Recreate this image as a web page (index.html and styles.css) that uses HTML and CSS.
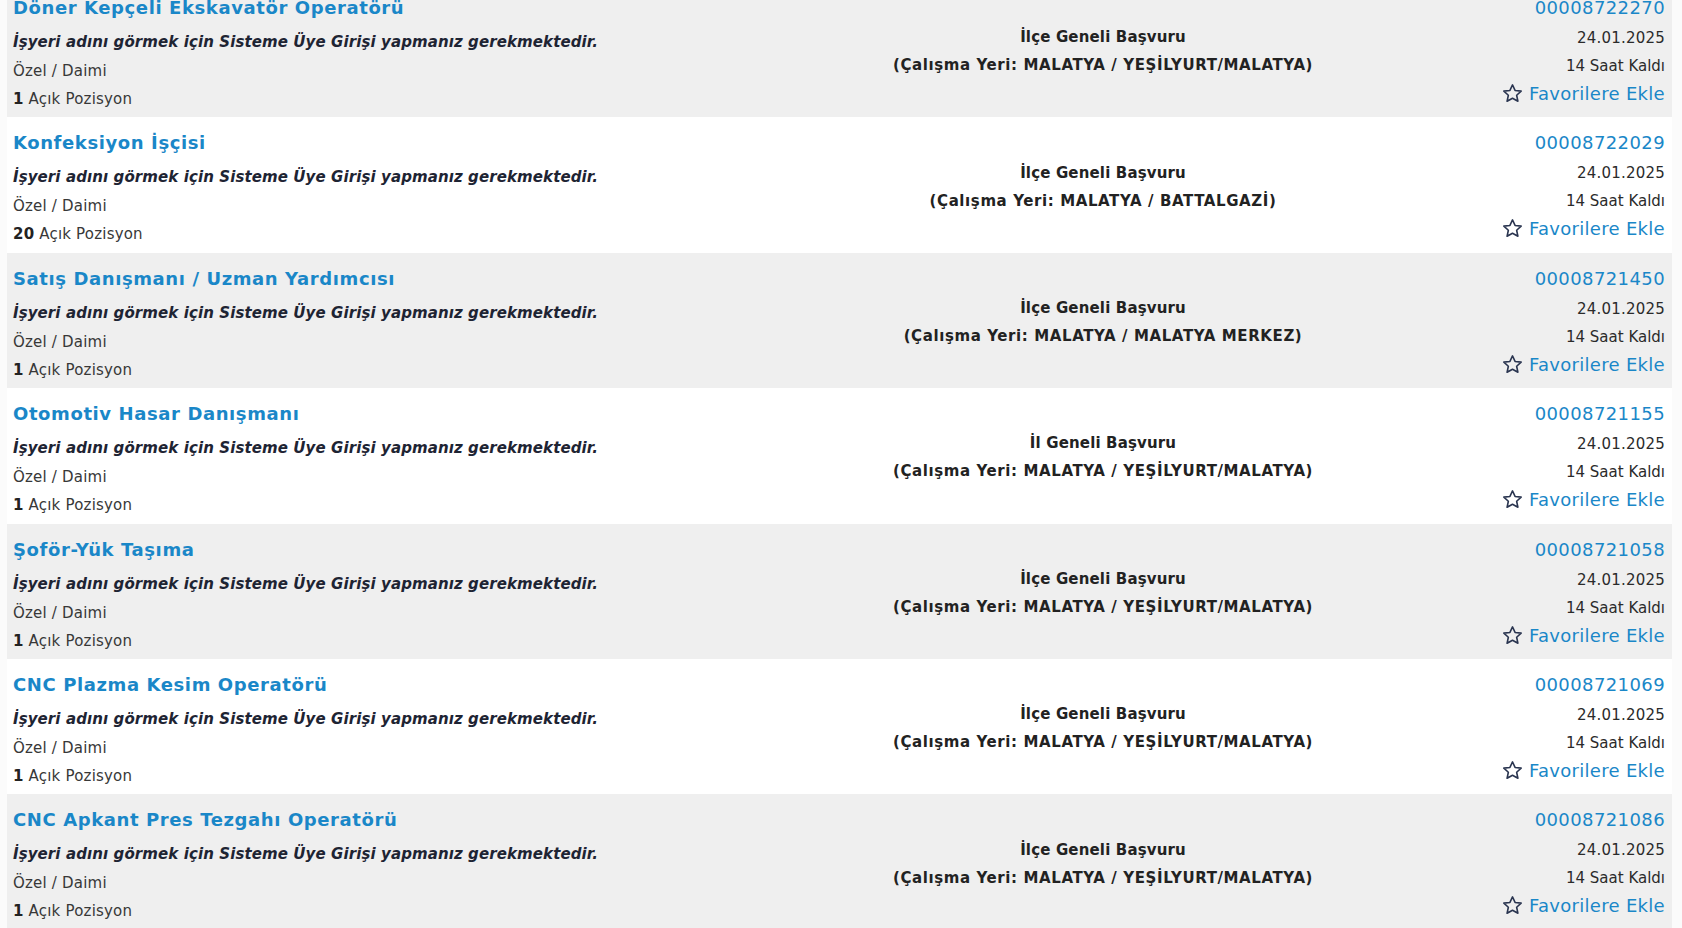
FILE: index.html
```html
<!DOCTYPE html>
<html lang="tr">
<head>
<meta charset="utf-8">
<title>İlanlar</title>
<link rel="stylesheet" href="styles.css">
</head>
<body>
<div class="list">
  <div class="row gray">
    <div class="left">
      <a class="title">Döner Kepçeli Ekskavatör Operatörü</a>
      <div class="firm">İşyeri adını görmek için Sisteme Üye Girişi yapmanız gerekmektedir.</div>
      <div class="meta">Özel / Daimi</div>
      <div class="meta"><b>1</b> Açık Pozisyon</div>
    </div>
    <div class="mid">
      <div class="scope">İlçe Geneli Başvuru</div>
      <div class="place">(Çalışma Yeri: MALATYA / YEŞİLYURT/MALATYA)</div>
    </div>
    <div class="right">
      <a class="num">00008722270</a>
      <div class="date">24.01.2025</div>
      <div class="left-time">14 Saat Kaldı</div>
      <a class="fav"><svg class="star" viewBox="0 0 20 20"><path d="M10 1.8l2.45 5.3 5.8.65-4.3 3.95 1.2 5.7L10 14.5l-5.15 2.9 1.2-5.7-4.3-3.95 5.8-.65z"/></svg>Favorilere Ekle</a>
    </div>
  </div>
  <div class="row">
    <div class="left">
      <a class="title">Konfeksiyon İşçisi</a>
      <div class="firm">İşyeri adını görmek için Sisteme Üye Girişi yapmanız gerekmektedir.</div>
      <div class="meta">Özel / Daimi</div>
      <div class="meta"><b>20</b> Açık Pozisyon</div>
    </div>
    <div class="mid">
      <div class="scope">İlçe Geneli Başvuru</div>
      <div class="place">(Çalışma Yeri: MALATYA / BATTALGAZİ)</div>
    </div>
    <div class="right">
      <a class="num">00008722029</a>
      <div class="date">24.01.2025</div>
      <div class="left-time">14 Saat Kaldı</div>
      <a class="fav"><svg class="star" viewBox="0 0 20 20"><path d="M10 1.8l2.45 5.3 5.8.65-4.3 3.95 1.2 5.7L10 14.5l-5.15 2.9 1.2-5.7-4.3-3.95 5.8-.65z"/></svg>Favorilere Ekle</a>
    </div>
  </div>
  <div class="row gray">
    <div class="left">
      <a class="title">Satış Danışmanı / Uzman Yardımcısı</a>
      <div class="firm">İşyeri adını görmek için Sisteme Üye Girişi yapmanız gerekmektedir.</div>
      <div class="meta">Özel / Daimi</div>
      <div class="meta"><b>1</b> Açık Pozisyon</div>
    </div>
    <div class="mid">
      <div class="scope">İlçe Geneli Başvuru</div>
      <div class="place">(Çalışma Yeri: MALATYA / MALATYA MERKEZ)</div>
    </div>
    <div class="right">
      <a class="num">00008721450</a>
      <div class="date">24.01.2025</div>
      <div class="left-time">14 Saat Kaldı</div>
      <a class="fav"><svg class="star" viewBox="0 0 20 20"><path d="M10 1.8l2.45 5.3 5.8.65-4.3 3.95 1.2 5.7L10 14.5l-5.15 2.9 1.2-5.7-4.3-3.95 5.8-.65z"/></svg>Favorilere Ekle</a>
    </div>
  </div>
  <div class="row">
    <div class="left">
      <a class="title">Otomotiv Hasar Danışmanı</a>
      <div class="firm">İşyeri adını görmek için Sisteme Üye Girişi yapmanız gerekmektedir.</div>
      <div class="meta">Özel / Daimi</div>
      <div class="meta"><b>1</b> Açık Pozisyon</div>
    </div>
    <div class="mid">
      <div class="scope">İl Geneli Başvuru</div>
      <div class="place">(Çalışma Yeri: MALATYA / YEŞİLYURT/MALATYA)</div>
    </div>
    <div class="right">
      <a class="num">00008721155</a>
      <div class="date">24.01.2025</div>
      <div class="left-time">14 Saat Kaldı</div>
      <a class="fav"><svg class="star" viewBox="0 0 20 20"><path d="M10 1.8l2.45 5.3 5.8.65-4.3 3.95 1.2 5.7L10 14.5l-5.15 2.9 1.2-5.7-4.3-3.95 5.8-.65z"/></svg>Favorilere Ekle</a>
    </div>
  </div>
  <div class="row gray">
    <div class="left">
      <a class="title">Şoför-Yük Taşıma</a>
      <div class="firm">İşyeri adını görmek için Sisteme Üye Girişi yapmanız gerekmektedir.</div>
      <div class="meta">Özel / Daimi</div>
      <div class="meta"><b>1</b> Açık Pozisyon</div>
    </div>
    <div class="mid">
      <div class="scope">İlçe Geneli Başvuru</div>
      <div class="place">(Çalışma Yeri: MALATYA / YEŞİLYURT/MALATYA)</div>
    </div>
    <div class="right">
      <a class="num">00008721058</a>
      <div class="date">24.01.2025</div>
      <div class="left-time">14 Saat Kaldı</div>
      <a class="fav"><svg class="star" viewBox="0 0 20 20"><path d="M10 1.8l2.45 5.3 5.8.65-4.3 3.95 1.2 5.7L10 14.5l-5.15 2.9 1.2-5.7-4.3-3.95 5.8-.65z"/></svg>Favorilere Ekle</a>
    </div>
  </div>
  <div class="row">
    <div class="left">
      <a class="title">CNC Plazma Kesim Operatörü</a>
      <div class="firm">İşyeri adını görmek için Sisteme Üye Girişi yapmanız gerekmektedir.</div>
      <div class="meta">Özel / Daimi</div>
      <div class="meta"><b>1</b> Açık Pozisyon</div>
    </div>
    <div class="mid">
      <div class="scope">İlçe Geneli Başvuru</div>
      <div class="place">(Çalışma Yeri: MALATYA / YEŞİLYURT/MALATYA)</div>
    </div>
    <div class="right">
      <a class="num">00008721069</a>
      <div class="date">24.01.2025</div>
      <div class="left-time">14 Saat Kaldı</div>
      <a class="fav"><svg class="star" viewBox="0 0 20 20"><path d="M10 1.8l2.45 5.3 5.8.65-4.3 3.95 1.2 5.7L10 14.5l-5.15 2.9 1.2-5.7-4.3-3.95 5.8-.65z"/></svg>Favorilere Ekle</a>
    </div>
  </div>
  <div class="row gray">
    <div class="left">
      <a class="title">CNC Apkant Pres Tezgahı Operatörü</a>
      <div class="firm">İşyeri adını görmek için Sisteme Üye Girişi yapmanız gerekmektedir.</div>
      <div class="meta">Özel / Daimi</div>
      <div class="meta"><b>1</b> Açık Pozisyon</div>
    </div>
    <div class="mid">
      <div class="scope">İlçe Geneli Başvuru</div>
      <div class="place">(Çalışma Yeri: MALATYA / YEŞİLYURT/MALATYA)</div>
    </div>
    <div class="right">
      <a class="num">00008721086</a>
      <div class="date">24.01.2025</div>
      <div class="left-time">14 Saat Kaldı</div>
      <a class="fav"><svg class="star" viewBox="0 0 20 20"><path d="M10 1.8l2.45 5.3 5.8.65-4.3 3.95 1.2 5.7L10 14.5l-5.15 2.9 1.2-5.7-4.3-3.95 5.8-.65z"/></svg>Favorilere Ekle</a>
    </div>
  </div>
</div>
</body>
</html>
```

FILE: styles.css
```css
html, body {
  margin: 0;
  padding: 0;
}
body {
  background: #fbfbfb;
  font-family: "DejaVu Sans", Verdana, sans-serif;
  color: #2b2b2b;
  height: 928px;
  overflow: hidden;
}
.list {
  margin: -18px 10px 0 7px;
}
.row {
  box-sizing: border-box;
  height: 135.4px;
  padding: 9px 7px 0 6px;
  display: grid;
  grid-template-columns: 780px 620px 1fr;
  background: #ffffff;
}
.row.gray {
  background: #efefef;
}
.left, .right {
  display: flex;
  flex-direction: column;
}
.title {
  font-size: 18px;
  font-weight: bold;
  letter-spacing: 0.6px;
  line-height: 34px;
  color: #1a87c8;
  white-space: nowrap;
}
.firm {
  margin-top: 3px;
  font-size: 15px;
  font-weight: bold;
  font-style: italic;
  letter-spacing: 0.1px;
  line-height: 28px;
  color: #1e2433;
  white-space: nowrap;
}
.meta {
  font-size: 15px;
  letter-spacing: 0.2px;
  line-height: 28px;
  color: #383838;
}
.firm + .meta {
  margin-top: 1px;
}
.meta b {
  color: #222;
}
.mid {
  display: flex;
  flex-direction: column;
  justify-content: center;
  align-items: center;
  padding-bottom: 6px;
  font-size: 15px;
  font-weight: bold;
  line-height: 28px;
  color: #222;
  white-space: nowrap;
}
.scope {
  letter-spacing: 0.15px;
}
.place {
  letter-spacing: 0.6px;
}
.right {
  align-items: flex-end;
  text-align: right;
}
.num {
  font-size: 18px;
  letter-spacing: 0.4px;
  line-height: 34px;
  color: #1a87c8;
}
.date, .left-time {
  font-size: 15px;
  line-height: 28px;
  color: #2b2b2b;
}
.date {
  margin-top: -1px;
  letter-spacing: 0.2px;
}
.fav {
  display: flex;
  align-items: center;
  gap: 6px;
  font-size: 18px;
  letter-spacing: 0.3px;
  line-height: 27px;
  color: #1a87c8;
  white-space: nowrap;
}
.star {
  width: 21px;
  height: 21px;
  fill: none;
  stroke: #2a3550;
  stroke-width: 1.5;
  stroke-linejoin: round;
}
```
